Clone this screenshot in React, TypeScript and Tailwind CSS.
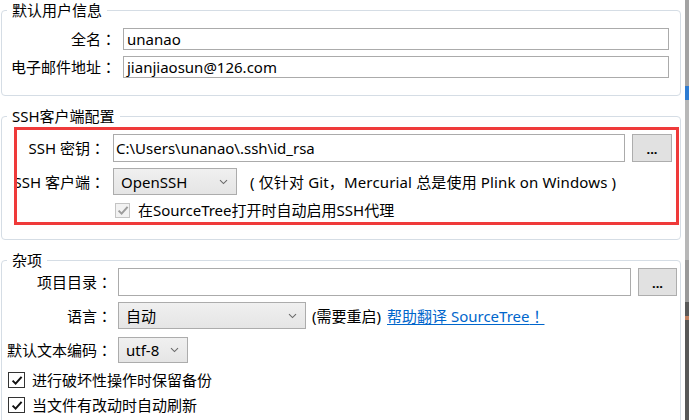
import React from "react";

function Chevron() {
  return (
    <svg width="9" height="6" viewBox="0 0 9 6" className="shrink-0">
      <path d="M1 1.2 L4.5 4.6 L8 1.2" fill="none" stroke="#6a6a6a" strokeWidth="1.1" />
    </svg>
  );
}

function Check({ disabled }: { disabled?: boolean }) {
  return (
    <span
      className={
        disabled
          ? "flex h-[15px] w-[15px] shrink-0 items-center justify-center border border-[#c4c4c4] bg-[#f2f2f2]"
          : "flex h-[16px] w-[17px] shrink-0 items-center justify-center border border-[#333333] bg-white"
      }
    >
      <svg width="12" height="11" viewBox="0 0 12 11">
        <path
          d="M1.6 5.6 L4.6 8.6 L10.6 1.8"
          fill="none"
          stroke={disabled ? "#9c9c9c" : "#111111"}
          strokeWidth="2"
        />
      </svg>
    </span>
  );
}

function Colon() {
  return <span className="font-['Noto_Sans_CJK_JP',sans-serif]">：</span>;
}

function Label({ text, w }: { text: string; w: string }) {
  return (
    <span className={`${w} shrink-0 text-right whitespace-nowrap`}>
      {text}
      <Colon />
    </span>
  );
}

function Select({ value, w, h }: { value: string; w: string; h: string }) {
  return (
    <div
      className={`flex ${w} ${h} items-center justify-between border border-[#acacac] bg-gradient-to-b from-[#f0f0f0] to-[#e5e5e5] pl-[7px] pr-[8px]`}
    >
      <span>{value}</span>
      <Chevron />
    </div>
  );
}

function DotsButton({ w }: { w: string }) {
  return (
    <div
      className={`flex ${w} h-[28px] shrink-0 items-center justify-center border border-[#adadad] bg-[#e1e1e1] pt-[3px] text-[13px] font-bold leading-none`}
    >
      ...
    </div>
  );
}

export default function App() {
  return (
    <div className="relative flex h-[420px] w-[689px] overflow-hidden bg-white font-['Noto_Sans','Noto_Sans_CJK_SC',sans-serif] text-[15px] leading-[20px] text-black">
      <div className="flex w-[685px] flex-col pl-[1px]">
        {/* Group 1 */}
        <fieldset className="w-[680px] rounded-[4px] border border-[#d5dde5]">
          <legend className="ml-[5px] px-[5px] leading-[20px]">默认用户信息</legend>
          <div className="grid grid-cols-[114px_1fr] items-center gap-x-[7px] gap-y-[6px] pb-[17px] pr-[11px] pt-[8px]">
            <Label text="全名" w="w-[114px]" />
            <div className="flex h-[22px] items-center border border-[#ababab] px-[3px]">unanao</div>
            <Label text="电子邮件地址" w="w-[114px]" />
            <div className="flex h-[22px] items-center border border-[#ababab] px-[3px]">
              jianjiaosun@126.com
            </div>
          </div>
        </fieldset>

        {/* Group 2 */}
        <fieldset className="mt-[10px] w-[680px] rounded-[4px] border border-[#d5dde5]">
          <legend className="ml-[5px] px-[5px] leading-[20px]">SSH客户端配置</legend>
          <div className="flex flex-col pb-[19px] pr-[8px] pt-[8px]">
            <div className="flex items-center">
              <Label text="SSH 密钥" w="w-[103px]" />
              <div className="ml-[8px] flex h-[28px] flex-1 items-center border border-[#ababab] px-[2px]">
                C:\Users\unanao\.ssh\id_rsa
              </div>
              <div className="ml-[7px]">
                <DotsButton w="w-[40px]" />
              </div>
            </div>
            <div className="mt-[6px] flex items-center">
              <Label text="SSH 客户端" w="w-[103px]" />
              <div className="ml-[8px]">
                <Select value="OpenSSH" w="w-[124px]" h="h-[27px]" />
              </div>
              <span className="ml-[13px] whitespace-nowrap tracking-[0.15px]">
                ( 仅针对 Git，Mercurial 总是使用 Plink on Windows )
              </span>
            </div>
            <div className="mt-[5px] flex h-[20px] items-center pl-[113px]">
              <Check disabled />
              <span className="ml-[8px]">在SourceTree打开时自动启用SSH代理</span>
            </div>
          </div>
        </fieldset>

        {/* Group 3 */}
        <fieldset className="mt-[10px] w-[680px] rounded-[4px] border border-[#d5dde5]">
          <legend className="ml-[5px] px-[5px] leading-[20px]">杂项</legend>
          <div className="-mt-[2px] flex flex-col pb-[14px] pr-[3px]">
            <div className="flex items-center">
              <Label text="项目目录" w="w-[110px]" />
              <div className="ml-[6px] h-[28px] flex-1 border border-[#ababab]" />
              <div className="ml-[7px]">
                <DotsButton w="w-[39px]" />
              </div>
            </div>
            <div className="mt-[6px] flex items-center">
              <Label text="语言" w="w-[110px]" />
              <div className="ml-[6px]">
                <Select value="自动" w="w-[188px]" h="h-[27px]" />
              </div>
              <span className="ml-[6px]">(需要重启)</span>
              <span className="ml-[6px] text-[#0066cc] underline decoration-[#0066cc] underline-offset-[2px]">
                帮助翻译 SourceTree
                <span className="font-['Noto_Sans_CJK_JP',sans-serif]">！</span>
              </span>
            </div>
            <div className="mt-[8px] flex items-center">
              <Label text="默认文本编码" w="w-[110px]" />
              <div className="ml-[6px]">
                <Select value="utf-8" w="w-[70px]" h="h-[26px]" />
              </div>
            </div>
            <div className="mt-[7px] flex h-[20px] items-center pl-[6px]">
              <Check />
              <span className="ml-[7px]">进行破坏性操作时保留备份</span>
            </div>
            <div className="mt-[5px] flex h-[20px] items-center pl-[6px]">
              <Check />
              <span className="ml-[7px]">当文件有改动时自动刷新</span>
            </div>
          </div>
        </fieldset>
      </div>

      {/* right edge strip */}
      <div className="flex w-[4px] flex-col">
        <div className="h-[86px] bg-[#a3a3a3]" />
        <div className="h-[14px] bg-[#2e7cd2]" />
        <div className="h-[160px] bg-[#b8b8b8]" />
        <div className="h-[42px] bg-[#9a9a9a]" />
        <div className="h-[14px] bg-[#5a5a5a]" />
        <div className="h-[4px] bg-[#c08060]" />
        <div className="flex-1 bg-[#585858]" />
      </div>

      {/* red annotation rectangle */}
      <div className="pointer-events-none absolute left-[14px] top-[127px] h-[98px] w-[665px] border-[3px] border-[#ef3a3a]" />
    </div>
  );
}
